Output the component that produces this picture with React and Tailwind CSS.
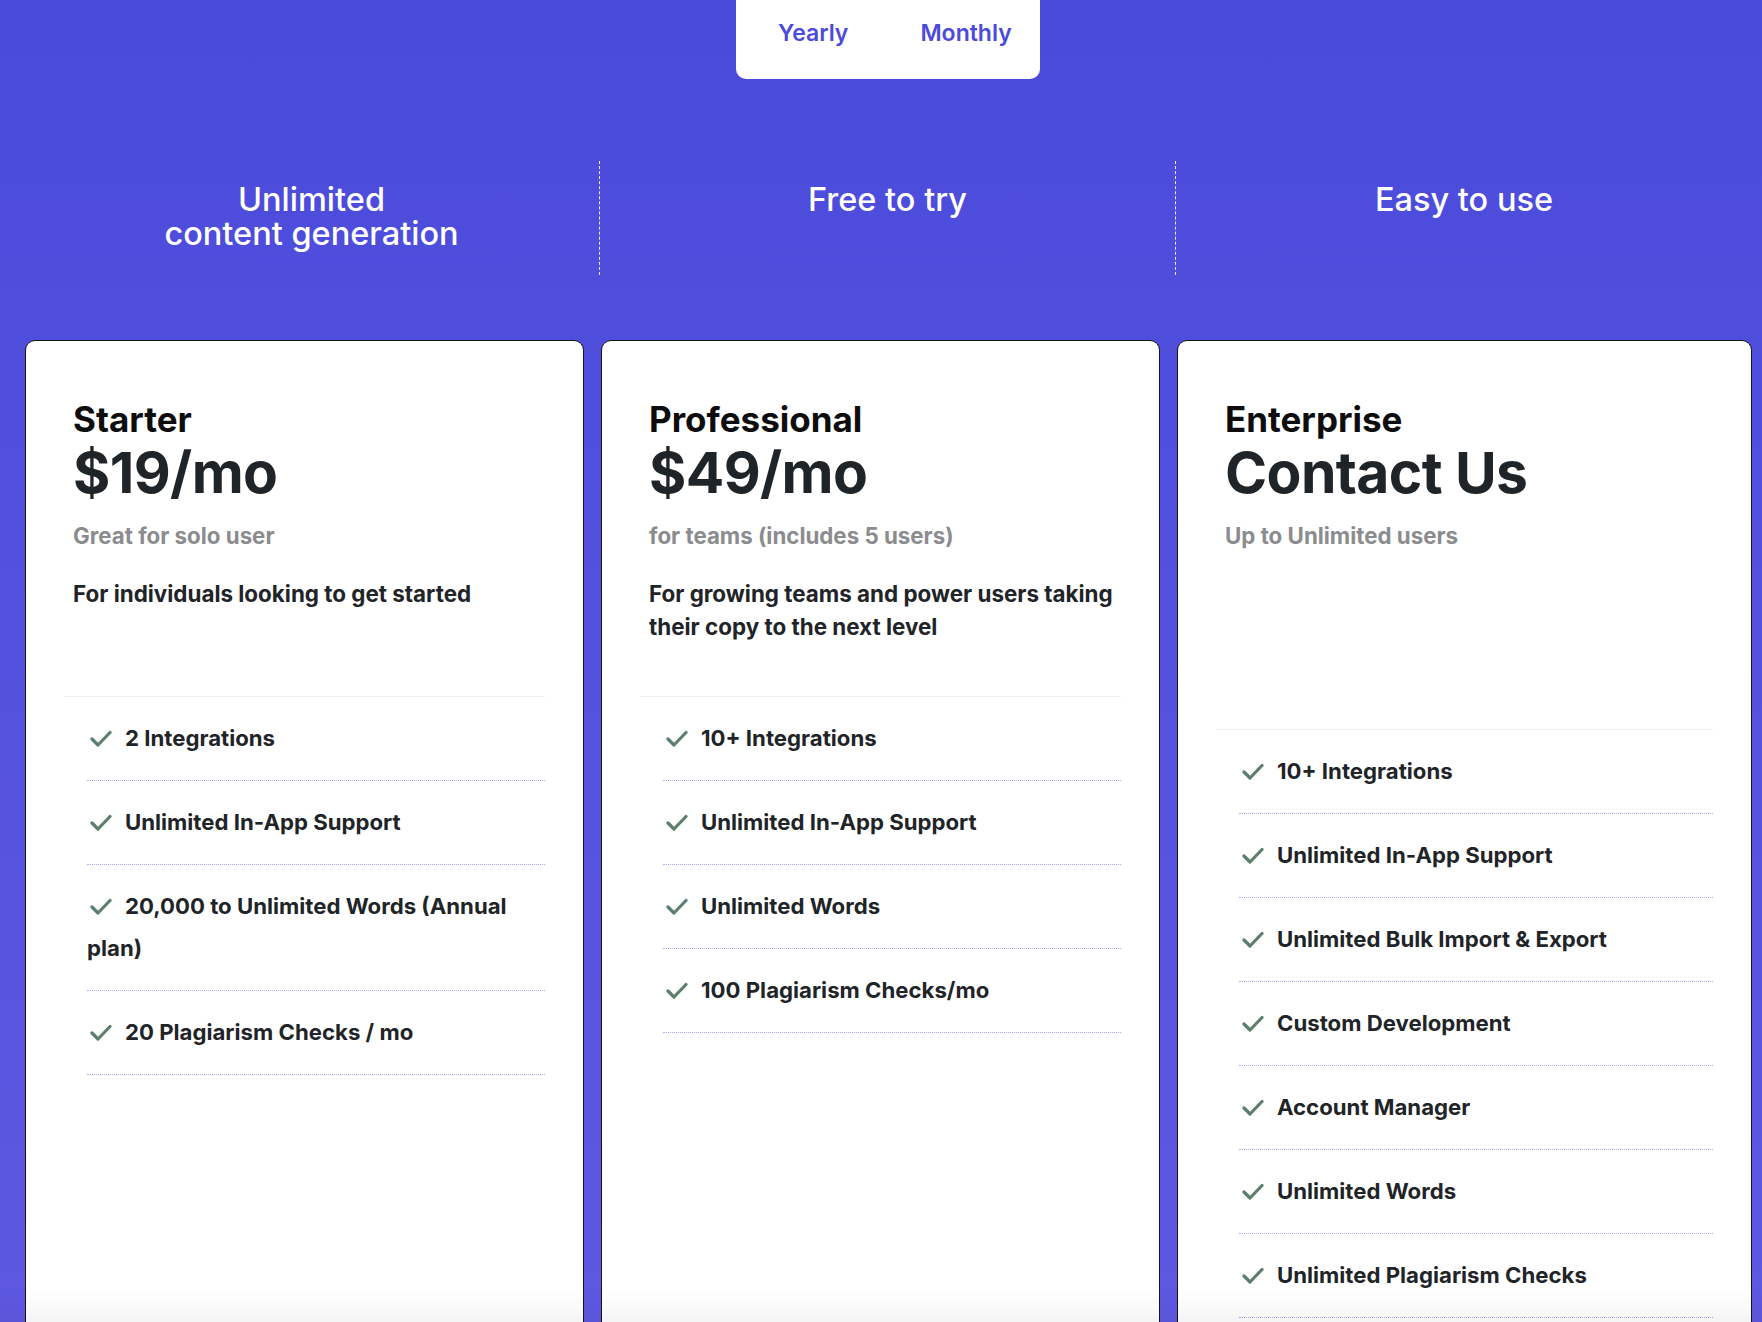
import React from 'react';

const plans = [
  {
    name: 'Starter',
    price: '$19/mo',
    sub: 'Great for solo user',
    desc: 'For individuals looking to get started',
    descH: 'min-h-[66px]',
    features: [
      '2 Integrations',
      'Unlimited In-App Support',
      '20,000 to Unlimited Words (Annual plan)',
      '20 Plagiarism Checks / mo',
    ],
  },
  {
    name: 'Professional',
    price: '$49/mo',
    sub: 'for teams (includes 5 users)',
    desc: 'For growing teams and power users taking their copy to the next level',
    descH: 'min-h-[66px]',
    features: [
      '10+ Integrations',
      'Unlimited In-App Support',
      'Unlimited Words',
      '100 Plagiarism Checks/mo',
    ],
  },
  {
    name: 'Enterprise',
    price: 'Contact Us',
    sub: 'Up to Unlimited users',
    desc: '',
    descH: 'min-h-[99px]',
    features: [
      '10+ Integrations',
      'Unlimited In-App Support',
      'Unlimited Bulk Import & Export',
      'Custom Development',
      'Account Manager',
      'Unlimited Words',
      'Unlimited Plagiarism Checks',
    ],
  },
];

const perks = [
  ['Unlimited', 'content generation'],
  ['Free to try'],
  ['Easy to use'],
];

function Check() {
  return (
    <svg width="22" height="17" viewBox="0 0 22 17" className="inline-block align-[-1px] ml-[3px] mr-[13px]">
      <path d="M2 9l6 6L20 2.5" fill="none" stroke="#5b7f6b" strokeWidth="3.2" strokeLinecap="round" strokeLinejoin="round" />
    </svg>
  );
}

function PlanCard({ plan, last }) {
  return (
    <div className={`ml-px ${last ? '' : 'mr-[16px]'} h-[1100px] rounded-[10px] border border-[#151515] bg-white`}>
      <div className="pl-[47px] pr-[30px] pt-[56px]">
        <h3 className="text-[35px] leading-[44px] font-bold text-[#0d0d0d]">{plan.name}</h3>
        <div className="text-[57px] leading-[64px] font-bold tracking-[-0.6px] text-[#1f2428]">{plan.price}</div>
        <p className="mt-[14px] text-[22.3px] leading-[33px] font-bold text-[#8b8c8e]">{plan.sub}</p>
        <p className={`mt-[25px] text-[22.4px] leading-[33px] font-bold text-[#1f2428] ${plan.descH}`}>{plan.desc}</p>
      </div>
      <div className="mt-[53px] mx-[38px] ml-[39px] border-t border-[#efefef]">
        <ul className="ml-[22px]">
          {plan.features.map((f) => (
            <li
              key={f}
              className="pt-[20px] pb-[21px] border-b border-dotted border-[#a9a5ee] text-[22.2px] leading-[42px] font-bold text-[#1f2428]"
            >
              <Check />
              {f}
            </li>
          ))}
        </ul>
      </div>
    </div>
  );
}

export default function App() {
  return (
    <div
      className="relative h-[1322px] w-full overflow-hidden bg-gradient-to-b from-[#4a4adb] to-[#5e58e1]"
      style={{ fontFamily: 'Inter, "Noto Sans", sans-serif' }}
    >
      <div className="ml-[24px] w-[1728px]">
        <div className="flex justify-center">
          <div className="flex items-start h-[79px] w-[304px] gap-[72px] rounded-b-[10px] bg-white pl-[42px] pt-[19px]">
            <button className="text-[23px] leading-[28px] font-semibold text-[#4b4bdb]">Yearly</button>
            <button className="text-[23px] leading-[28px] font-semibold text-[#4b4bdb]">Monthly</button>
          </div>
        </div>

        <div className="mt-[82px] grid grid-cols-3">
          {perks.map((lines, i) => (
            <div
              key={i}
              className={`h-[114px] pt-[22px] text-center text-white text-[32.5px] leading-[34px] font-medium ${
                i < 2 ? 'border-r border-dashed border-white/90' : ''
              }`}
            >
              {lines.map((l) => (
                <div key={l}>{l}</div>
              ))}
            </div>
          ))}
        </div>

        <div className="mt-[65px] grid grid-cols-3">
          {plans.map((p, i) => (
            <PlanCard key={p.name} plan={p} last={i === 2} />
          ))}
        </div>
      </div>
      <div className="pointer-events-none absolute bottom-0 left-0 h-[32px] w-full bg-gradient-to-b from-transparent to-black/[0.04]" />
    </div>
  );
}
